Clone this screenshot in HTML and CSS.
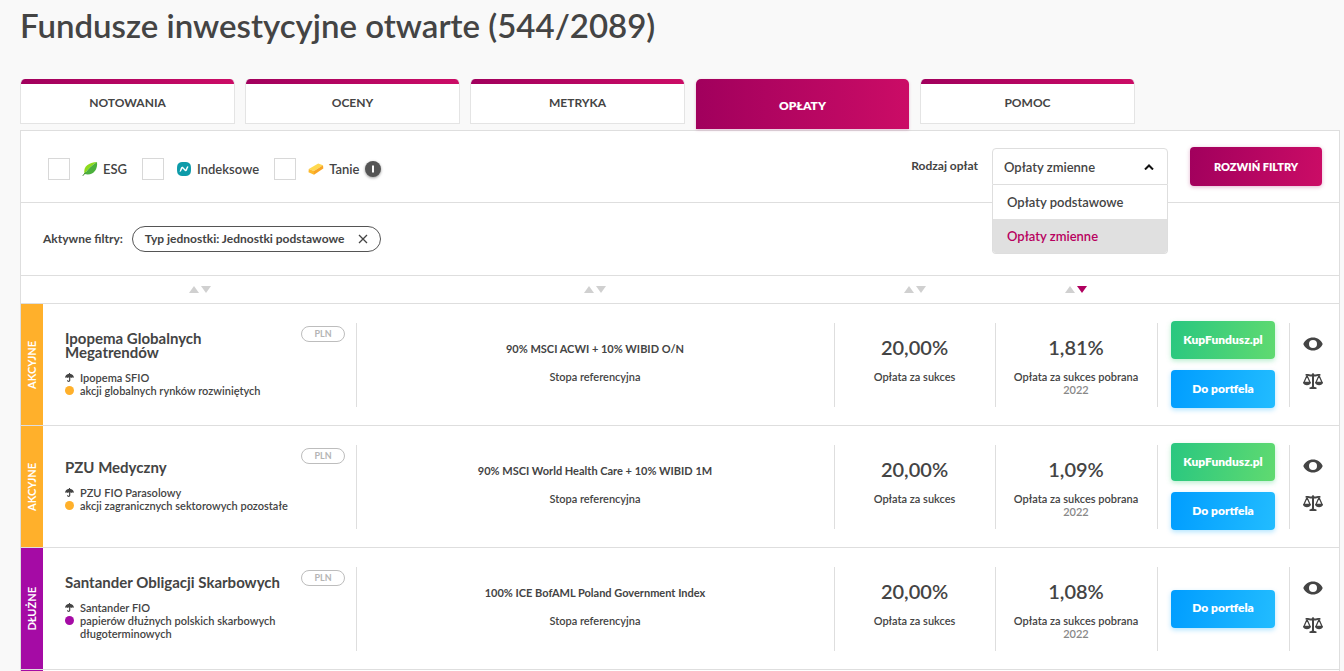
FILE: index.html
```html
<!DOCTYPE html>
<html lang="pl">
<head>
<meta charset="utf-8">
<meta name="viewport" content="width=device-width, initial-scale=1">
<title>Fundusze inwestycyjne otwarte</title>
<link rel="stylesheet" href="styles.css">
</head>
<body>
<svg class="sprite" aria-hidden="true">
  <symbol id="eye" viewBox="0 0 20 14"><path fill-rule="evenodd" d="M10 .5C5.600.5 2 3 .3 7 2 11 5.600 13.500 10 13.500S18 11 19.700 7C18 3 14.400.5 10 .5ZM10 11a4 4 0 1 1 0-8 4 4 0 0 1 0 8Z"/></symbol>
  <symbol id="scale" viewBox="0 0 20 16"><path d="M8.800 2.800V1.500a1.200 1.200 0 0 1 2.400 0v1.300H11V13.500c.2.700 1.300.6 2.500 1V16h-7v-1.500c1.200-.4 2.300-.3 2.500-1V2.800Z"/><path d="M2.500 1.200c2.500-.6 4 .6 7.500.3 3.500.3 5-.9 7.500-.3v1.300c-2.500.1-4 1.300-7.500 1.100-3.500.2-5-1-7.500-1.100Z"/><path fill="none" stroke="currentColor" stroke-width="1.300" d="M4 2.500.9 9.500h6.200L4 2.500M16 2.500 12.900 9.500h6.200L16 2.500"/><path d="M.1 9.200h7.700c0 4-7.700 4-7.700 0M12.200 9.200h7.700c0 4-7.700 4-7.700 0"/></symbol>
  <symbol id="umbrella" viewBox="0 0 9 9"><path d="M4 .7V0h1v.7C7.200.9 8.800 2.400 9 5 8.200 4.500 7.200 4.400 6.400 5 6 4.700 5.800 4.600 5.300 4.600V7.300C5.300 9.500 2 9.500 2 7.300h1.200c0 .9.900.9.900 0V4.600c-.7 0-1.100.1-1.500.4C1.800 4.400.8 4.500 0 5 .2 2.400 1.800.9 4 .7Z"/></symbol>
  <symbol id="up" viewBox="0 0 10 7"><path d="M0 7 5 0l5 7Z"/></symbol>
  <symbol id="down" viewBox="0 0 10 7"><path d="M0 0h10L5 7Z"/></symbol>
</svg>

<main class="page">
  <h1 class="title">Fundusze inwestycyjne otwarte (544/2089)</h1>

  <nav class="tabs">
    <a class="tab" href="#notowania">NOTOWANIA</a>
    <a class="tab" href="#oceny">OCENY</a>
    <a class="tab" href="#metryka">METRYKA</a>
    <a class="tab tab-active" href="#oplaty" aria-current="page">OPŁATY</a>
    <a class="tab" href="#pomoc">POMOC</a>
  </nav>

  <section class="card">
    <div class="filters">
      <div class="checks">
        <label class="check"><input type="checkbox">
          <svg width="16" height="16" viewBox="0 0 16 16"><path fill="#8edb1c" d="M2.500 13C1 5 7 1.500 15 1 10 4 6 8 2.500 13Z"/><path fill="#4bb03c" d="M15 1c1 8-4 14-12.500 12C6 8 10 4 15 1Z"/><path fill="none" stroke="#3a7d2c" stroke-width="1" d="M.8 14.800 3.500 11.500"/></svg>
          <span>ESG</span></label>
        <label class="check"><input type="checkbox">
          <svg width="16" height="16" viewBox="0 0 16 16"><path fill="#0d9ba9" d="M8 1c5.500 0 7 1.500 7 7s-1.500 7-7 7-7-1.500-7-7 1.500-7 7-7Z"/><path fill="none" stroke="#fff" stroke-width="1.500" d="M3.800 10.200c1.500.2 1.300-4.400 2.800-3.700l2.800 2.900c1.500.7 1-3.600 2.800-3.700"/></svg>
          <span>Indeksowe</span></label>
        <label class="check"><input type="checkbox">
          <svg width="16" height="16" viewBox="0 0 16 16"><path fill="#ffd94f" d="m.8 8 9.400-5.600L15 4.300 6 10Z"/><path fill="#fdb92a" d="M.8 8 6 10v3.800L.5 11.200Z"/><path fill="#f8a526" d="m6 10 9-5.700.3 3.200L6 13.800Z"/></svg>
          <span>Tanie</span></label>
        <button class="info" type="button" aria-label="Informacje"><svg width="16" height="16" viewBox="0 0 16 16"><path stroke="#fff" stroke-width="2" d="M8 4.500v7"/></svg></button>
      </div>
      <div class="controls">
        <label class="control-label" for="fee">Rodzaj opłat</label>
        <div class="dropdown">
          <select id="fee" class="select"><option>Opłaty zmienne</option><option>Opłaty podstawowe</option></select>
          <svg class="chevron" width="10" height="6" viewBox="0 0 10 6"><path fill="none" stroke="#111" stroke-width="2" d="M1 5.500 5 1.500l4 4"/></svg>
          <ul class="menu">
            <li class="option">Opłaty podstawowe</li>
            <li class="option option-selected">Opłaty zmienne</li>
          </ul>
        </div>
        <button class="expand" type="button">ROZWIŃ FILTRY</button>
      </div>
    </div>

    <div class="active-filters">
      <span class="active-label">Aktywne filtry:</span>
      <button class="chip" type="button"><span>Typ jednostki: Jednostki podstawowe</span><svg width="10" height="10" viewBox="0 0 10 10"><path fill="none" stroke="#444" stroke-width="1.300" d="m1 1 8 8M9 1 1 9"/></svg></button>
    </div>

    <table class="funds">
      <colgroup><col class="c-type"><col class="c-name"><col><col class="c-fee"><col class="c-paid"><col class="c-actions"><col class="c-tools"></colgroup>
      <thead>
        <tr>
          <th></th>
          <th><button class="sort" type="button" aria-label="Sortuj"><svg><use href="#up"/></svg><svg><use href="#down"/></svg></button></th>
          <th><button class="sort" type="button" aria-label="Sortuj"><svg><use href="#up"/></svg><svg><use href="#down"/></svg></button></th>
          <th><button class="sort" type="button" aria-label="Sortuj"><svg><use href="#up"/></svg><svg><use href="#down"/></svg></button></th>
          <th><button class="sort" type="button" aria-label="Sortuj"><svg><use href="#up"/></svg><svg class="sorted"><use href="#down"/></svg></button></th>
          <th></th>
          <th></th>
        </tr>
      </thead>
      <tbody>
        <tr class="fund equity">
          <td class="type"><span>AKCYJNE</span></td>
          <td class="name">
            <div class="name-box">
              <div class="name-text">
                <a class="fund-name" href="#ipopema">Ipopema Globalnych Megatrendów</a>
                <p class="meta"><svg class="mark"><use href="#umbrella"/></svg>Ipopema SFIO</p>
                <p class="meta"><i class="dot"></i>akcji globalnych rynków rozwiniętych</p>
              </div>
              <span class="currency">PLN</span>
            </div>
          </td>
          <td class="data"><p class="rate">90% MSCI ACWI + 10% WIBID O/N</p><p class="caption">Stopa referencyjna</p></td>
          <td class="data"><p class="value">20,00%</p><p class="caption">Opłata za sukces</p></td>
          <td class="data"><p class="value">1,81%</p><p class="caption">Opłata za sukces pobrana</p><p class="year">2022</p></td>
          <td class="actions"><div class="action-list"><button class="btn btn-buy" type="button">KupFundusz.pl</button><button class="btn btn-add" type="button">Do portfela</button></div></td>
          <td class="tools"><div class="tool-list"><button class="tool" type="button" aria-label="Obserwuj"><svg width="20" height="14"><use href="#eye"/></svg></button><button class="tool" type="button" aria-label="Porównaj"><svg width="20" height="16"><use href="#scale"/></svg></button></div></td>
        </tr>
        <tr class="fund equity">
          <td class="type"><span>AKCYJNE</span></td>
          <td class="name">
            <div class="name-box">
              <div class="name-text">
                <a class="fund-name" href="#pzu">PZU Medyczny</a>
                <p class="meta"><svg class="mark"><use href="#umbrella"/></svg>PZU FIO Parasolowy</p>
                <p class="meta"><i class="dot"></i>akcji zagranicznych sektorowych pozostałe</p>
              </div>
              <span class="currency">PLN</span>
            </div>
          </td>
          <td class="data"><p class="rate">90% MSCI World Health Care + 10% WIBID 1M</p><p class="caption">Stopa referencyjna</p></td>
          <td class="data"><p class="value">20,00%</p><p class="caption">Opłata za sukces</p></td>
          <td class="data"><p class="value">1,09%</p><p class="caption">Opłata za sukces pobrana</p><p class="year">2022</p></td>
          <td class="actions"><div class="action-list"><button class="btn btn-buy" type="button">KupFundusz.pl</button><button class="btn btn-add" type="button">Do portfela</button></div></td>
          <td class="tools"><div class="tool-list"><button class="tool" type="button" aria-label="Obserwuj"><svg width="20" height="14"><use href="#eye"/></svg></button><button class="tool" type="button" aria-label="Porównaj"><svg width="20" height="16"><use href="#scale"/></svg></button></div></td>
        </tr>
        <tr class="fund debt">
          <td class="type"><span>DŁUŻNE</span></td>
          <td class="name">
            <div class="name-box">
              <div class="name-text">
                <a class="fund-name" href="#santander">Santander Obligacji Skarbowych</a>
                <p class="meta"><svg class="mark"><use href="#umbrella"/></svg>Santander FIO</p>
                <p class="meta"><i class="dot"></i>papierów dłużnych polskich skarbowych długoterminowych</p>
              </div>
              <span class="currency">PLN</span>
            </div>
          </td>
          <td class="data"><p class="rate">100% ICE BofAML Poland Government Index</p><p class="caption">Stopa referencyjna</p></td>
          <td class="data"><p class="value">20,00%</p><p class="caption">Opłata za sukces</p></td>
          <td class="data"><p class="value">1,08%</p><p class="caption">Opłata za sukces pobrana</p><p class="year">2022</p></td>
          <td class="actions"><div class="action-list"><button class="btn btn-add" type="button">Do portfela</button></div></td>
          <td class="tools"><div class="tool-list"><button class="tool" type="button" aria-label="Obserwuj"><svg width="20" height="14"><use href="#eye"/></svg></button><button class="tool" type="button" aria-label="Porównaj"><svg width="20" height="16"><use href="#scale"/></svg></button></div></td>
        </tr>
        <tr class="next debt"><td class="type"></td><td colspan="6"></td></tr>
      </tbody>
    </table>
  </section>
</main>
</body>
</html>
```
FILE: styles.css
```css
* { box-sizing: border-box; }
body {
  margin: 0;
  background: #f9f9f9;
  color: #444;
  font-family: Lato, "Open Sans", sans-serif;
  font-size: 12px;
  font-weight: 700;
}
button, select { font: inherit; color: inherit; }
button { padding: 0; border: 0; background: none; cursor: pointer; }
p, ul { margin: 0; padding: 0; }
svg { display: block; fill: currentColor; }
.sprite { position: absolute; width: 0; height: 0; }

.page { padding: 0 4px 0 20px; }
.title { margin: 0 0 29px; font-size: 33px; line-height: 50px; font-weight: 600; }

.tabs {
  display: grid;
  grid-template-columns: repeat(5, 1fr);
  align-items: start;
  gap: 10px;
  height: 51px;
  padding-right: 205px;
}
.tab {
  padding: 13px 0 9px;
  border: 1px solid #e4e4e4;
  border-top: 0;
  border-radius: 5px 5px 0 0;
  background: linear-gradient(90deg, #a1005d, #cb0c66) top / 100% 5px no-repeat #fff;
  color: #444;
  font-size: 12px;
  line-height: 22px;
  text-align: center;
  text-decoration: none;
}
.tab-active {
  padding: 16px 0 12px;
  margin: 0 1px;
  border: 0;
  background: linear-gradient(90deg, #a1005d, #cb0c66);
  box-shadow: 0 1px 3px rgba(161, 0, 93, .25);
  color: #fff;
  font-weight: 800;
}

.card { border: 1px solid #dedede; border-bottom: 0; background: #fff; }

.filters {
  display: flex;
  justify-content: space-between;
  align-items: center;
  padding: 16px 17px 16px 27px;
  border-bottom: 1px solid #dedede;
}
.checks { display: flex; align-items: center; gap: 15px; padding-top: 4px; }
.check { display: flex; align-items: center; gap: 5px; font-size: 13px; line-height: 16px; font-weight: 600; }
.check input {
  appearance: none;
  width: 22px;
  height: 22px;
  margin: 0 7px 0 0;
  border: 1px solid #d8d8d8;
  background: #fff;
}
.info { margin-left: -9px; border-radius: 50%; background: #555; box-shadow: 0 1px 3px rgba(0, 0, 0, .4); }

.controls { display: flex; align-items: center; }
.control-label { margin-right: 14px; padding-bottom: 2px; }
.dropdown { position: relative; width: 176px; margin-right: 22px; }
.select {
  display: block;
  appearance: none;
  width: 100%;
  height: 37px;
  padding: 0 11px;
  border: 1px solid #dedede;
  border-radius: 4px 4px 0 0;
  background: #fff;
  font-size: 13px;
  font-weight: 600;
}
.chevron { position: absolute; right: 14px; top: 16px; pointer-events: none; }
.menu {
  position: absolute;
  z-index: 1;
  top: 100%;
  left: 0;
  right: 0;
  overflow: hidden;
  border: 1px solid #dedede;
  border-top: 0;
  border-radius: 0 0 4px 4px;
  background: #fff;
  font-size: 13px;
  font-weight: 600;
  line-height: 34px;
  list-style: none;
}
.option { padding: 0 14px; }
.option-selected { background: #e0e0e0; color: #b8005f; }
.expand {
  width: 132px;
  height: 39px;
  border-radius: 4px;
  background: linear-gradient(100deg, #a1005d, #cb0c66);
  box-shadow: 0 1px 4px rgba(161, 0, 93, .3);
  color: #fff;
  font-size: 11px;
  font-weight: 800;
}

.active-filters { display: flex; align-items: center; gap: 9px; padding: 23px 22px; }
.active-label, .chip span { padding-bottom: 2px; }
.chip {
  display: flex;
  align-items: center;
  gap: 14px;
  height: 26px;
  padding: 0 12px;
  border: 1px solid #555;
  border-radius: 13px;
}

.funds { width: 100%; border-spacing: 0; table-layout: fixed; }
.funds th, .funds td { padding: 0; border-bottom: 1px solid #dedede; }
.funds th { height: 29px; border-top: 1px solid #dedede; }
.c-type { width: 22px; }
.c-name { width: 313px; }
.c-fee { width: 161px; }
.c-paid { width: 162px; }
.c-actions { width: 132px; }
.c-tools { width: 50px; }
.sort { display: flex; justify-content: center; gap: 2px; margin: 0 auto; color: #d0d0d0; }
.sort svg { width: 10px; height: 7px; }
.sort .sorted { color: #b0005f; }

.fund { height: 122px; }
.type { color: #fff; font-size: 11px; text-align: center; }
.type span { display: block; margin: 0 auto; writing-mode: vertical-rl; transform: rotate(180deg); line-height: 22px; }
.equity .type { background: #ffb02b; }
.debt .type { background: #a50ba5; }
.name-box { display: flex; align-items: center; min-height: 84px; padding: 0 11px 0 22px; }
.name-text { flex: 1; min-width: 0; padding-bottom: 2px; }
.fund-name {
  display: block;
  max-width: 220px;
  margin-bottom: 12px;
  color: #444;
  font-size: 15px;
  line-height: 14px;
  text-decoration: none;
}
.meta { display: flex; font-size: 11px; line-height: 13px; font-weight: 600; }
.mark { flex: none; width: 9px; height: 9px; margin: 2px 6px 0 0; }
.dot { flex: none; width: 9px; height: 9px; margin: 2px 6px 0 0; border-radius: 50%; }
.equity .dot { background: #ffb02b; }
.debt .dot { background: #a50ba5; }
.currency {
  align-self: flex-start;
  flex: none;
  width: 44px;
  margin-top: 3px;
  border: 1px solid #bdbdbd;
  border-radius: 8px;
  color: #b5b5b5;
  font-size: 9px;
  line-height: 14px;
  text-align: center;
}
.data, .actions, .tools {
  background: linear-gradient(#dedede, #dedede) 0 50% / 1px calc(100% - 37px) no-repeat;
}
.funds .data { padding-top: 31px; text-align: center; vertical-align: top; }
.rate, .value { margin-bottom: 11px; line-height: 24px; }
.rate { margin-bottom: 9px; padding-top: 2px; font-size: 11px; }
.value { font-size: 20px; font-weight: 600; }
.caption, .year { font-size: 11px; line-height: 13px; font-weight: 600; }
.year { color: #888; }
.action-list { display: flex; flex-direction: column; gap: 11px; padding: 0 14px; }
.btn { height: 38px; border-radius: 4px; padding-bottom: 2px; color: #fff; font-weight: 800; }
.btn-buy { background: linear-gradient(100deg, #29c780, #60da70); box-shadow: 0 2px 5px rgba(60, 207, 120, .35); }
.btn-add { background: linear-gradient(100deg, #009dff, #22bcff); box-shadow: 0 2px 5px rgba(0, 170, 255, .3); }
.tool-list { display: flex; flex-direction: column; align-items: center; gap: 22px; padding: 0 2px 4px 0; }
.funds .next td { height: 1px; border: 0; }
```
